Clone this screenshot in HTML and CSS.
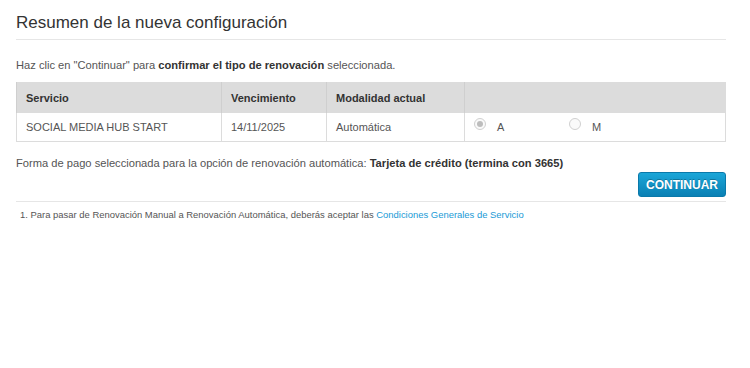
FILE: index.html
```html
<!DOCTYPE html>
<html lang="es">
<head>
<meta charset="utf-8">
<title>Resumen de la nueva configuración</title>
<link rel="stylesheet" href="styles.css">
</head>
<body>
<div class="page">
  <h1 class="title">Resumen de la nueva configuración</h1>
  <p class="intro">Haz clic en "Continuar" para <strong>confirmar el tipo de renovación</strong> seleccionada.</p>
  <table class="summary">
    <thead>
      <tr>
        <th class="c1">Servicio</th>
        <th class="c2">Vencimiento</th>
        <th class="c3">Modalidad actual</th>
        <th class="c4"></th>
      </tr>
    </thead>
    <tbody>
      <tr>
        <td>SOCIAL MEDIA HUB START</td>
        <td>14/11/2025</td>
        <td>Automática</td>
        <td>
          <div class="radios">
            <label class="opt opt-a"><span class="radio checked"></span>A</label>
            <label class="opt"><span class="radio"></span>M</label>
          </div>
        </td>
      </tr>
    </tbody>
  </table>
  <p class="payment">Forma de pago seleccionada para la opción de renovación automática: <strong>Tarjeta de crédito (termina con 3665)</strong></p>
  <div class="actions"><button class="btn" type="button">CONTINUAR</button></div>
  <p class="note">1. Para pasar de Renovación Manual a Renovación Automática, deberás aceptar las <a href="#">Condiciones Generales de Servicio</a></p>
</div>
</body>
</html>
```
FILE: styles.css
```css
* { box-sizing: border-box; }
html, body { margin: 0; padding: 0; background: #fff; }
body { font-family: "Liberation Sans", Arial, sans-serif; color: #555; }
.page { width: 710px; margin-left: 16px; padding-top: 12px; }
.title {
  font-size: 17px; font-weight: normal; color: #333; margin: 0;
  line-height: 22px; padding-bottom: 5px; border-bottom: 1px solid #e6e6e6;
}
.intro { font-size: 11.15px; margin: 18px 0 0; line-height: 14px; }
.intro strong { color: #333; }
.summary {
  width: 710px; border-collapse: collapse; margin-top: 10px;
  font-size: 11px; border: 1px solid #dcdcdc;
}
.summary th {
  background: #dcdcdc; color: #333; text-align: left; font-weight: bold;
  height: 30px; padding: 0 9px; border-left: 1px solid #cfcfcf;
}
.summary td {
  height: 29px; padding: 0 9px; border-left: 1px solid #dcdcdc; color: #555;
}
.summary .c1 { width: 205px; }
.summary .c2 { width: 105px; }
.summary .c3 { width: 138px; }
.radios { display: flex; align-items: center; }
.opt { display: flex; align-items: center; color: #555; }
.opt-a { width: 95px; }
.radio {
  width: 12px; height: 12px; border-radius: 50%; border: 1px solid #d0d0d0;
  background: #fafafa; margin-right: 11px; margin-top: -5px; position: relative;
}
.radio.checked::after {
  content: ""; position: absolute; left: 2px; top: 2px; width: 6px; height: 6px;
  border-radius: 50%; background: #bdbdbd;
}
.payment { font-size: 11.15px; margin: 14px 0 0; line-height: 14px; }
.payment strong { color: #333; }
.actions { display: flex; justify-content: flex-end; margin-top: 2px; padding-bottom: 4px; border-bottom: 1px solid #e6e6e6; }
.btn {
  font-family: "Liberation Sans", Arial, sans-serif; font-weight: bold; font-size: 12px;
  color: #fff; text-shadow: 0 -1px 0 rgba(0,0,0,0.25);
  background: linear-gradient(#1ba6d8, #0a80b4); border: 1px solid #0a79aa;
  border-radius: 3px; height: 25px; width: 88px; padding: 0; cursor: pointer;
}
.note { font-size: 9.45px; margin: 6px 0 0 4px; line-height: 14px; color: #555; }
.note a { color: #1a9ad6; text-decoration: none; }
```
